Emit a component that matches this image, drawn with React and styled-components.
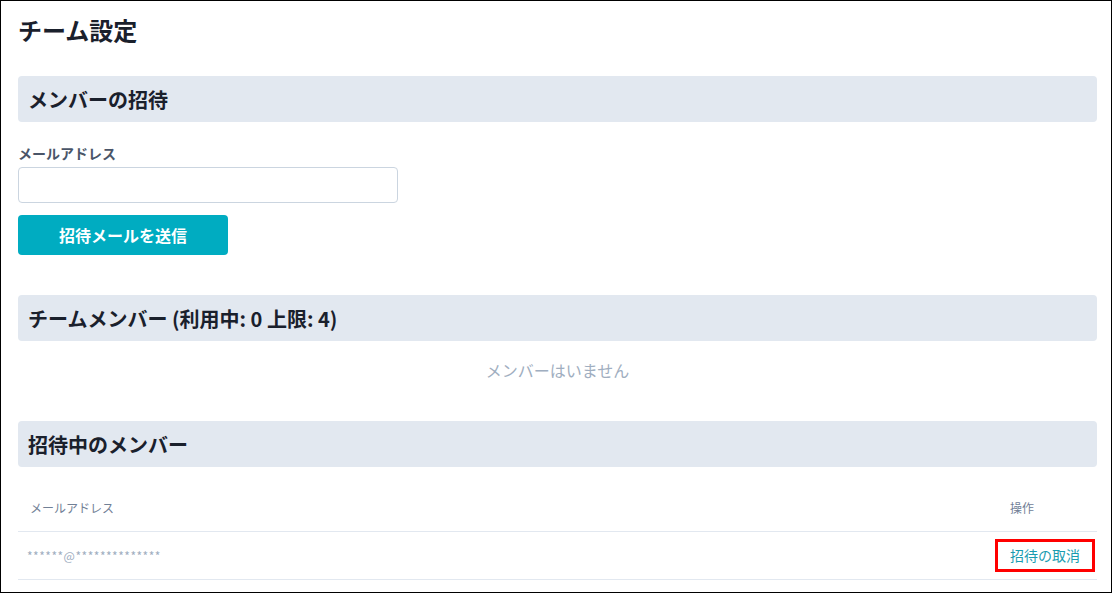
import React from 'react'
import styled, { createGlobalStyle } from 'styled-components';

const GlobalStyle = createGlobalStyle`
    body {
        margin: 0;
        background: #ffffff;
        font-family: "Noto Sans CJK JP", "Noto Sans", sans-serif;
    }
`

const invited = [
    { email: '******@**************' },
]

function App() {
  return (
    <>
    <GlobalStyle />
    <Page>
        <Title>チーム設定</Title>

        <SectionBar>メンバーの招待</SectionBar>
        <FieldLabel>メールアドレス</FieldLabel>
        <EmailInput type='email' />
        <SendBtn type='button'>招待メールを送信</SendBtn>

        <SectionBar $gap={40}>チームメンバー (利用中: 0 上限: 4)</SectionBar>
        <EmptyText>メンバーはいません</EmptyText>

        <SectionBar $gap={39}>招待中のメンバー</SectionBar>
        <Table>
            <thead>
                <tr>
                    <HeadCell>メールアドレス</HeadCell>
                    <HeadCell $action>操作</HeadCell>
                </tr>
            </thead>
            <tbody>
                {invited.map((row) => (
                    <tr key={row.email}>
                        <BodyCell>{row.email}</BodyCell>
                        <BodyCell $action>
                            <CancelLink>招待の取消</CancelLink>
                        </BodyCell>
                    </tr>
                ))}
            </tbody>
        </Table>
    </Page>
    </>
  )
}

export default App;

const Page = styled.main`
    width: 1112px;
    height: 593px;
    box-sizing: border-box;
    border: 1px solid #000000;
    padding: 11px 14px 0 17px;
    display: flex;
    flex-direction: column;
    align-items: flex-start;
`

const Title = styled.h1`
    margin: 0;
    font-size: 24px;
    line-height: 36px;
    font-weight: 700;
    color: #1a202c;
`

const SectionBar = styled.h2`
    margin: ${p => p.$gap ?? 28}px 0 0 0;
    align-self: stretch;
    height: 46px;
    box-sizing: border-box;
    padding: 0 10px;
    display: flex;
    align-items: center;
    background-color: #e2e8f0;
    border-radius: 4px;
    font-size: 20px;
    font-weight: 700;
    color: #1a202c;
`

const FieldLabel = styled.label`
    margin-top: 21px;
    font-size: 14px;
    line-height: 20px;
    font-weight: 700;
    color: #4a5568;
`

const EmailInput = styled.input`
    margin-top: 4px;
    width: 380px;
    height: 36px;
    box-sizing: border-box;
    border: 1px solid #cbd5e0;
    border-radius: 4px;
    padding: 0 10px;
    font-size: 14px;
    outline: none;
`

const SendBtn = styled.button`
    margin-top: 12px;
    width: 210px;
    height: 40px;
    border: none;
    border-radius: 4px;
    background-color: #00acc1;
    color: #ffffff;
    font-family: inherit;
    font-size: 16px;
    font-weight: 700;
    cursor: pointer;
    padding: 0;
`

const EmptyText = styled.p`
    margin: 17px 0 0 0;
    align-self: stretch;
    text-align: center;
    font-size: 16px;
    line-height: 24px;
    color: #a0aec0;
`

const Table = styled.table`
    margin-top: 18px;
    align-self: stretch;
    border-collapse: collapse;
`

const HeadCell = styled.th`
    height: 46px;
    padding: 0 0 0 ${p => p.$action ? 15 : 12}px;
    width: ${p => p.$action ? '102px' : 'auto'};
    box-sizing: border-box;
    text-align: left;
    font-size: 12px;
    font-weight: 400;
    color: #718096;
    border-bottom: 1px solid #e2e8f0;
`

const BodyCell = styled.td`
    height: 48px;
    padding: 0 0 0 ${p => p.$action ? 0 : 9}px;
    box-sizing: border-box;
    font-size: 12px;
    letter-spacing: 0.5px;
    color: #a0aec0;
    border-bottom: 1px solid #e2e8f0;
    vertical-align: middle;
`

const CancelLink = styled.a`
    display: inline-block;
    padding: 2px 12px;
    border: 3px solid #ff0000;
    font-size: 14px;
    line-height: 23px;
    letter-spacing: 0;
    color: #1a9cb0;
    cursor: pointer;
`
